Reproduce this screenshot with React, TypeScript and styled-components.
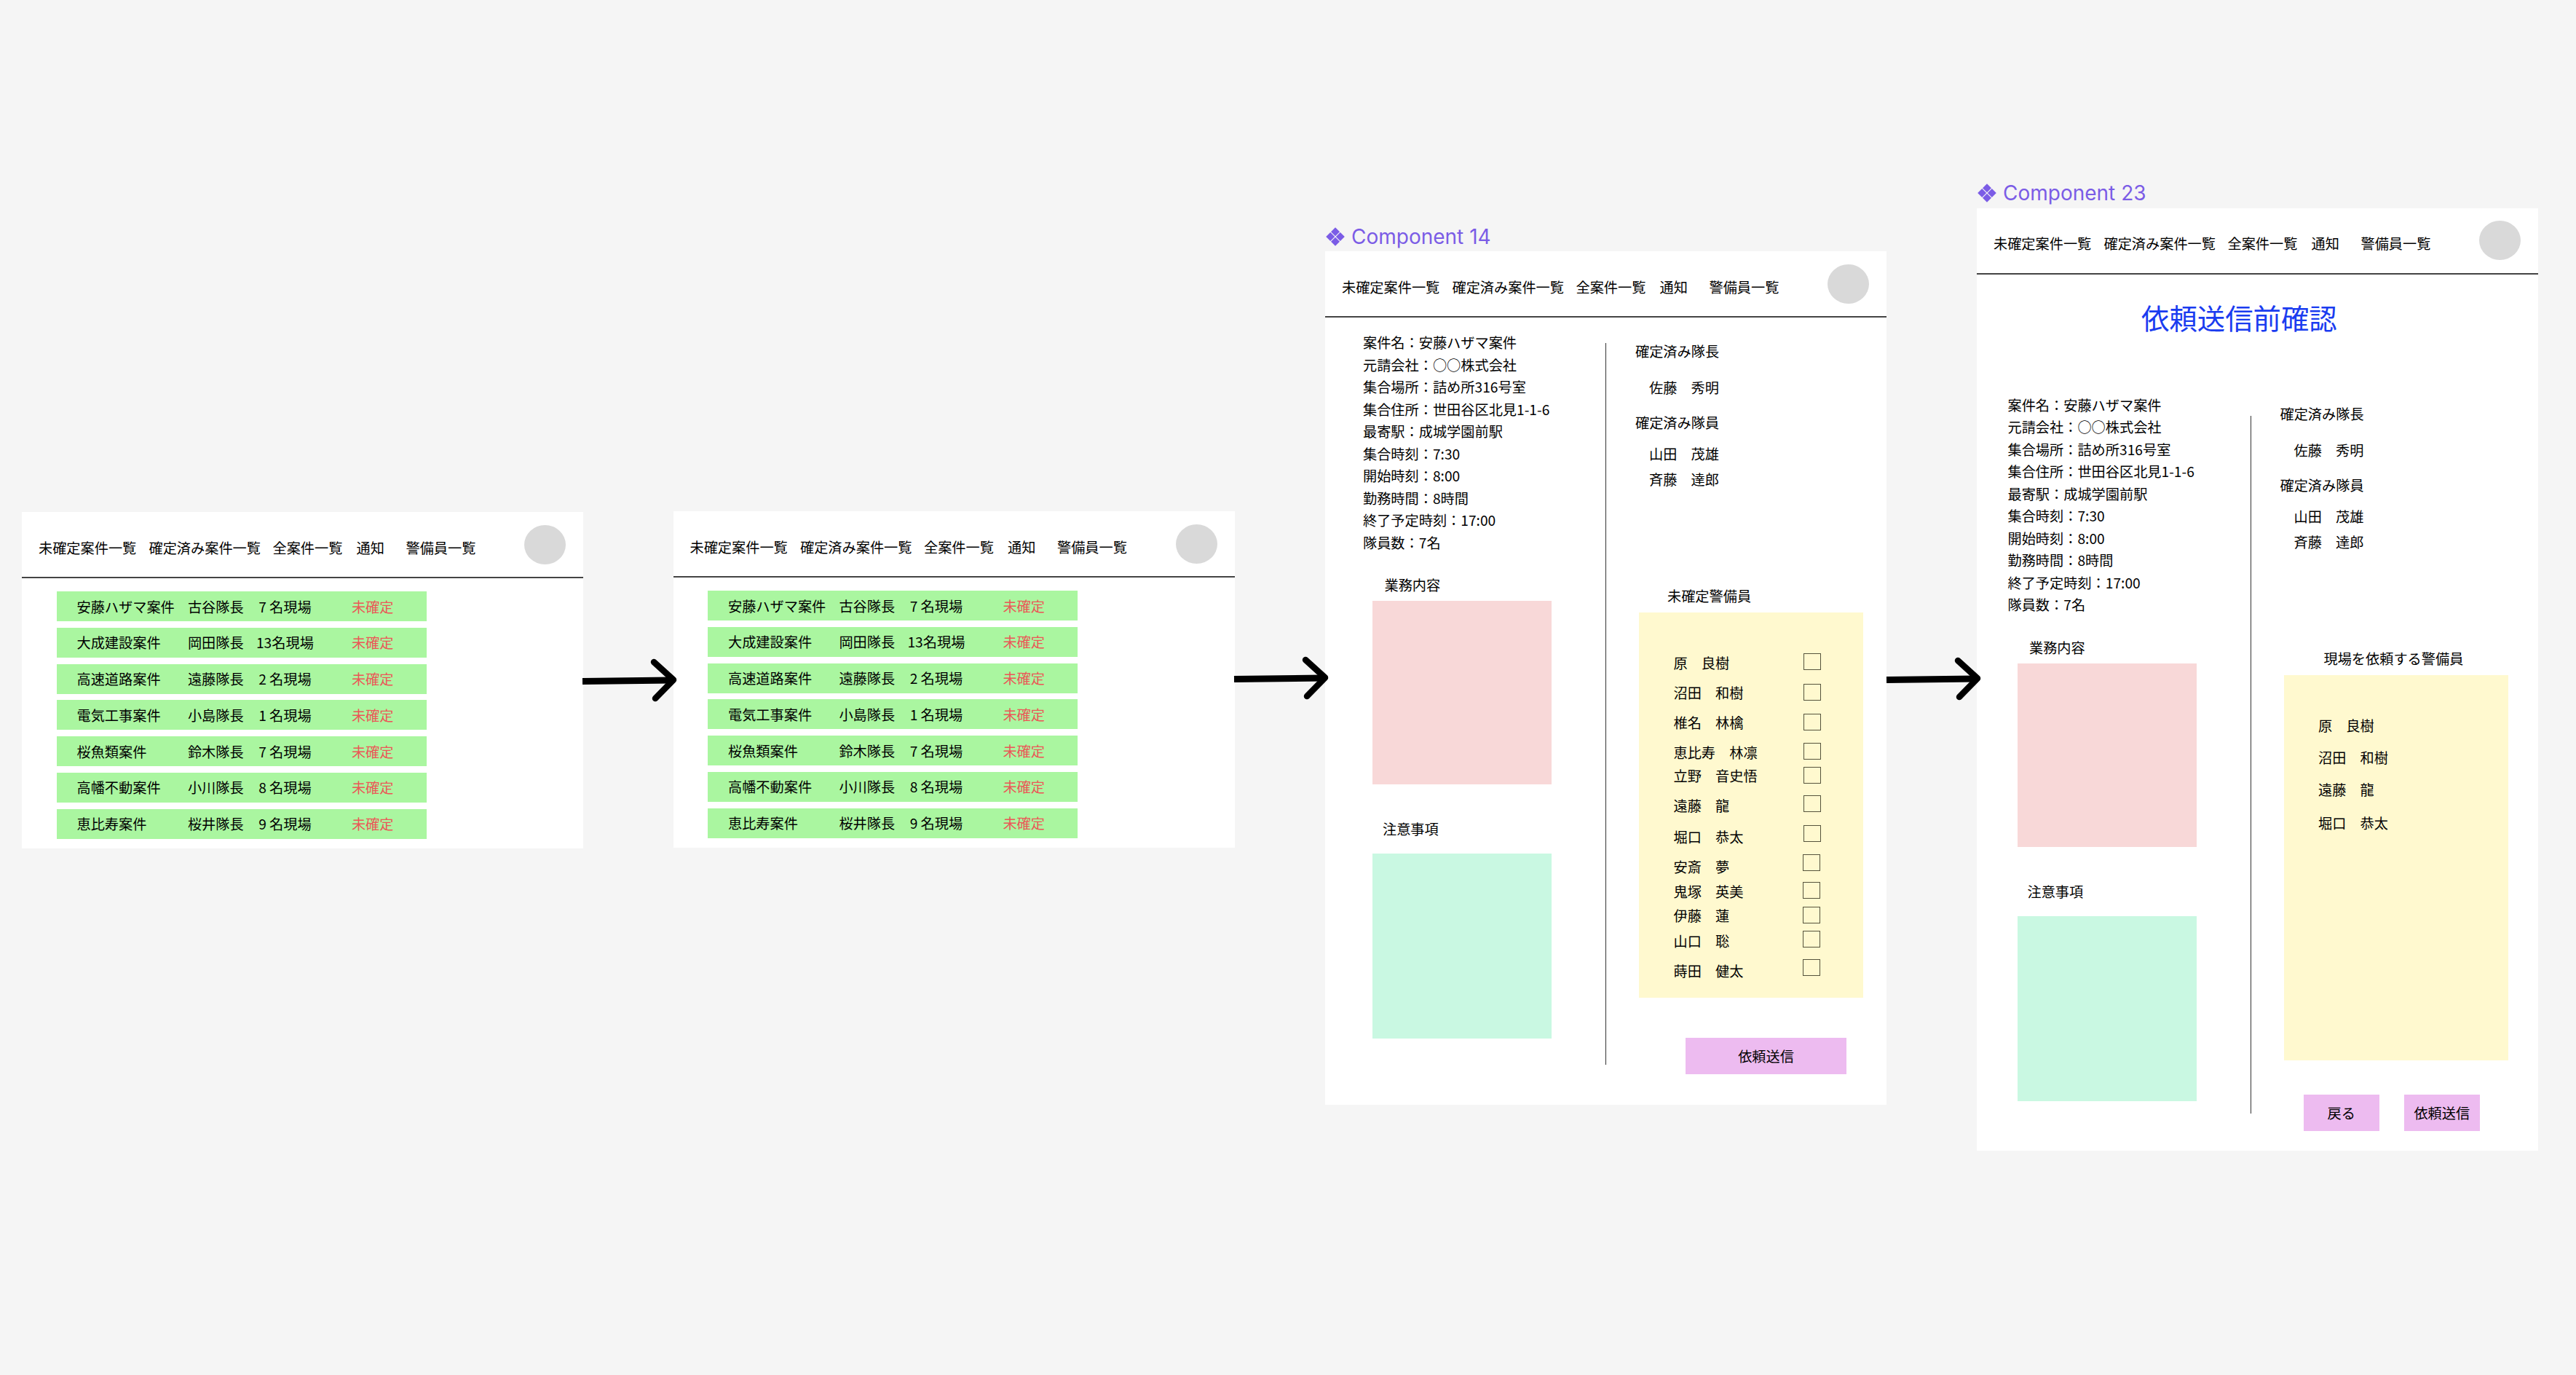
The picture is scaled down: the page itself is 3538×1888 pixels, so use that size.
import React from 'react';
import styled, { createGlobalStyle } from 'styled-components';

const GlobalStyle = createGlobalStyle`
  html, body {
    margin: 0;
    padding: 0;
    background: #f5f5f5;
  }
  body {
    font-family: "Noto Sans CJK JP", "Liberation Sans", sans-serif;
    font-size: 19.2px;
    color: #000;
  }
`;

const Canvas = styled.div`
  position: relative;
  width: 3538px;
  height: 1888px;
  overflow: hidden;
  background: #f5f5f5;
`;

const Frame = styled.section<{ $x: number; $y: number; $h: number }>`
  position: absolute;
  left: ${p => p.$x}px;
  top: ${p => p.$y}px;
  width: 771px;
  height: ${p => p.$h}px;
  background: #fff;
  display: flex;
  flex-direction: column;
`;

const FrameLabel = styled.div`
  position: absolute;
  left: 1px;
  top: -40.5px;
  height: 40px;
  display: flex;
  align-items: center;
  gap: 9px;
  color: #7b5ce6;
  font-family: Inter, "Liberation Sans", sans-serif;
  font-size: 28px;
  white-space: nowrap;
`;

const Header = styled.header`
  flex: none;
  height: 91px;
  margin-bottom: -1px;
  box-sizing: border-box;
  border-bottom: 2px solid #444;
  padding: 0 23px;
  display: flex;
  align-items: center;
  justify-content: space-between;
`;

const Nav = styled.nav`
  display: grid;
  grid-template-columns: 151.5px 170px 115px 68px auto;
  line-height: 28px;
  margin-top: 8px;
`;

const NavLink = styled.span`
  white-space: nowrap;
`;

const Avatar = styled.div`
  width: 57px;
  height: 54px;
  border-radius: 50%;
  background: #d9d9d9;
  margin-right: 1px;
`;

const CaseList = styled.ul`
  list-style: none;
  margin: 0;
  padding: 19px 0 0 47.5px;
  display: flex;
  flex-direction: column;
  gap: 8.8px;
`;

const CaseRow = styled.li`
  width: 508px;
  height: 41px;
  box-sizing: border-box;
  padding-left: 28px;
  background: #aaf6a0;
  display: grid;
  grid-template-columns: 152.4px 85px 97px 43px auto;
  align-items: center;
  white-space: nowrap;
`;

const CaseCount = styled.span`
  text-align: center;
`;

const CaseStatus = styled.span`
  grid-column: 5;
  color: #eb5757;
`;

const Title = styled.h1`
  margin: 0;
  height: 145px;
  padding: 34px 0 0 226px;
  box-sizing: border-box;
  color: #1a3cf0;
  font-size: 38.4px;
  font-weight: 400;
  line-height: 50px;
`;

const Columns = styled.div<{ $left: number }>`
  flex: 1;
  display: grid;
  grid-template-columns: ${p => p.$left}px 2px 1fr;
`;

const LeftColumn = styled.div<{ $pad: number }>`
  padding: 20px 0 0 ${p => p.$pad}px;
`;

const InfoLine = styled.div`
  line-height: 30.5px;
  white-space: nowrap;
`;

const BoxLabel = styled.div<{ $indent: number; $top: number; $bottom: number }>`
  margin: ${p => p.$top}px 0 ${p => p.$bottom}px ${p => p.$indent}px;
  line-height: 28px;
  white-space: nowrap;
`;

const NoteBox = styled.div<{ $color: string; $h: number }>`
  width: 246px;
  height: ${p => p.$h}px;
  margin-left: 13px;
  background: ${p => p.$color};
`;

const Divider = styled.div<{ $top: number; $bottom: number }>`
  margin: ${p => p.$top}px 0 ${p => p.$bottom}px;
  width: 1px;
  background: #333;
`;

const RightColumn = styled.div`
  padding-left: 39px;
`;

const CrewHeading = styled.div<{ $top: number }>`
  margin-top: ${p => p.$top}px;
  line-height: 28px;
  white-space: nowrap;
`;

const CrewName = styled.div<{ $top: number }>`
  margin: ${p => p.$top}px 0 0 19px;
  line-height: 28px;
  white-space: nowrap;
`;

const GuardTitle = styled.div<{ $top: number; $indent: number }>`
  margin: ${p => p.$top}px 0 9px ${p => p.$indent}px;
  line-height: 28px;
  white-space: nowrap;
`;

const GuardPanel = styled.div<{ $pad: number }>`
  width: 308px;
  height: 529px;
  margin-left: 5px;
  box-sizing: border-box;
  padding: ${p => p.$pad}px 0 0 47.5px;
  background: #fff9cf;
`;

const GuardRow = styled.label<{ $top: number }>`
  display: flex;
  align-items: flex-start;
  margin-top: ${p => p.$top}px;
  height: 24px;
  line-height: 24px;
  white-space: nowrap;
`;

const GuardName = styled.span`
  width: 178.5px;
`;

const Check = styled.span<{ $dy: number; $dx: number }>`
  width: 24px;
  height: 23px;
  box-sizing: border-box;
  margin: ${p => p.$dy}px 0 0 ${p => p.$dx}px;
  border: 1.5px solid #55533c;
`;

const GuardPlain = styled.div<{ $top: number }>`
  margin-top: ${p => p.$top}px;
  line-height: 24px;
  white-space: nowrap;
`;

const Actions = styled.div<{ $top: number; $indent: number }>`
  display: flex;
  gap: 34.5px;
  margin: ${p => p.$top}px 0 0 ${p => p.$indent}px;
`;

const ActionButton = styled.button<{ $w: number }>`
  width: ${p => p.$w}px;
  height: 50px;
  padding: 0;
  border: 0;
  background: #edbbf0;
  color: #000;
  font: inherit;
  line-height: 50px;
`;

const ArrowSvg = styled.svg<{ $x: number; $y: number }>`
  position: absolute;
  left: ${p => p.$x}px;
  top: ${p => p.$y}px;
  overflow: visible;
`;

const NAV_ITEMS = ['未確定案件一覧', '確定済み案件一覧', '全案件一覧', '通知', '警備員一覧'];

const CASES = [
  ['安藤ハザマ案件', '古谷隊長', '7 名現場'],
  ['大成建設案件', '岡田隊長', '13名現場'],
  ['高速道路案件', '遠藤隊長', '2 名現場'],
  ['電気工事案件', '小島隊長', '1 名現場'],
  ['桜魚類案件', '鈴木隊長', '7 名現場'],
  ['高幡不動案件', '小川隊長', '8 名現場'],
  ['恵比寿案件', '桜井隊長', '9 名現場']
];

const INFO = [
  '案件名：安藤ハザマ案件',
  '元請会社：○○株式会社',
  '集合場所：詰め所316号室',
  '集合住所：世田谷区北見1-1-6',
  '最寄駅：成城学園前駅',
  '集合時刻：7:30',
  '開始時刻：8:00',
  '勤務時間：8時間',
  '終了予定時刻：17:00',
  '隊員数：7名'
];

// top gap, then the checkbox's own little drift: the boxes were placed by hand
const GUARDS: [string, number, number, number][] = [
  ['原　良樹', 0, -1, 0],
  ['沼田　和樹', 16.6, 0, 0],
  ['椎名　林檎', 17.4, 0, 0],
  ['恵比寿　林凛', 17, -1, 0],
  ['立野　音史悟', 8.5, 0, 0],
  ['遠藤　龍', 16.2, -2, 0],
  ['堀口　恭太', 19.3, -3.5, 0],
  ['安斎　夢', 16.6, -4.6, -1],
  ['鬼塚　英美', 10.9, -1, -1.5],
  ['伊藤　蓮', 8.5, 0, -1],
  ['山口　聡', 11, -2, -1],
  ['蒔田　健太', 17, -4, -1]
];

const HeaderBar = () => (
  <Header>
    <Nav>
      {NAV_ITEMS.map(item => (
        <NavLink key={item}>{item}</NavLink>
      ))}
    </Nav>
    <Avatar />
  </Header>
);

const CasesFrame = ({ x, y }: { x: number; y: number }) => (
  <Frame $x={x} $y={y} $h={462}>
    <HeaderBar />
    <CaseList>
      {CASES.map(([name, leader, count]) => (
        <CaseRow key={name}>
          <span>{name}</span>
          <span>{leader}</span>
          <CaseCount>{count}</CaseCount>
          <CaseStatus>未確定</CaseStatus>
        </CaseRow>
      ))}
    </CaseList>
  </Frame>
);

const JobDetails = () => (
  <>
    {INFO.map(line => (
      <InfoLine key={line}>{line}</InfoLine>
    ))}
    <BoxLabel $indent={29.5} $top={29} $bottom={8}>業務内容</BoxLabel>
    <NoteBox $color="#f8d8d8" $h={252} />
    <BoxLabel $indent={27} $top={47} $bottom={20}>注意事項</BoxLabel>
    <NoteBox $color="#c9f8e2" $h={254} />
  </>
);

const CrewList = () => (
  <>
    <CrewHeading $top={33}>確定済み隊長</CrewHeading>
    <CrewName $top={22}>佐藤　秀明</CrewName>
    <CrewHeading $top={20}>確定済み隊員</CrewHeading>
    <CrewName $top={15}>山田　茂雄</CrewName>
    <CrewName $top={7}>斉藤　達郎</CrewName>
  </>
);

const ComponentIcon = () => (
  <svg width="26" height="26" viewBox="0 0 26 26" fill="currentColor">
    <path d="M13 .2 L19 6.2 L13 12.2 L7 6.2 Z" />
    <path d="M13 13.8 L19 19.8 L13 25.8 L7 19.8 Z" />
    <path d="M6.2 7 L12.2 13 L6.2 19 L.2 13 Z" />
    <path d="M19.8 7 L25.8 13 L19.8 19 L13.8 13 Z" />
  </svg>
);

const Arrow = ({ x, y }: { x: number; y: number }) => (
  <ArrowSvg $x={x} $y={y} width="130" height="66" viewBox="0 0 130 66" fill="none" stroke="#000">
    <path d="M0 34.5 L122 33" strokeWidth="9" />
    <path d="M98 8 L125 32.5 L100 58" strokeWidth="8.5" strokeLinecap="round" strokeLinejoin="round" />
  </ArrowSvg>
);

export default function App() {
  return (
    <Canvas>
      <GlobalStyle />
      <CasesFrame x={30} y={703} />
      <CasesFrame x={924.5} y={702} />

      <Frame $x={1820} $y={345} $h={1172}>
        <FrameLabel>
          <ComponentIcon />
          Component 14
        </FrameLabel>
        <HeaderBar />
        <Columns $left={385}>
          <LeftColumn $pad={52}>
            <JobDetails />
          </LeftColumn>
          <Divider $top={36} $bottom={55} />
          <RightColumn>
            <CrewList />
            <GuardTitle $top={132} $indent={44}>未確定警備員</GuardTitle>
            <GuardPanel $pad={57}>
              {GUARDS.map(([name, top, dy, dx]) => (
                <GuardRow key={name} $top={top}>
                  <GuardName>{name}</GuardName>
                  <Check $dy={dy} $dx={dx} />
                </GuardRow>
              ))}
            </GuardPanel>
            <Actions $top={54.5} $indent={69}>
              <ActionButton $w={221}>依頼送信</ActionButton>
            </Actions>
          </RightColumn>
        </Columns>
      </Frame>

      <Frame $x={2715} $y={285.5} $h={1294.5}>
        <FrameLabel>
          <ComponentIcon />
          Component 23
        </FrameLabel>
        <HeaderBar />
        <Title>依頼送信前確認</Title>
        <Columns $left={375.5}>
          <LeftColumn $pad={42.5}>
            <JobDetails />
          </LeftColumn>
          <Divider $top={50} $bottom={51} />
          <RightColumn>
            <CrewList />
            <GuardTitle $top={132} $indent={60}>現場を依頼する警備員</GuardTitle>
            <GuardPanel $pad={57}>
              <GuardPlain $top={0}>原　良樹</GuardPlain>
              <GuardPlain $top={20}>沼田　和樹</GuardPlain>
              <GuardPlain $top={20}>遠藤　龍</GuardPlain>
              <GuardPlain $top={22}>堀口　恭太</GuardPlain>
            </GuardPanel>
            <Actions $top={47.5} $indent={32.5}>
              <ActionButton $w={103.5}>戻る</ActionButton>
              <ActionButton $w={103.5}>依頼送信</ActionButton>
            </Actions>
          </RightColumn>
        </Columns>
      </Frame>

      <Arrow x={800} y={901} />
      <Arrow x={1695} y={898} />
      <Arrow x={2591} y={899} />
    </Canvas>
  );
}
